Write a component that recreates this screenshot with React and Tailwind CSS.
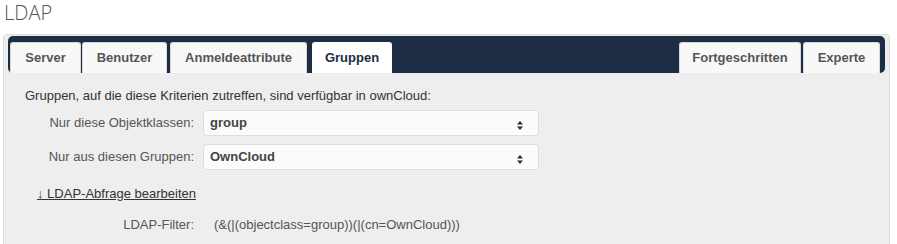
import React from "react";

const ArrowIcon = () => (
	<svg width="6" height="9" viewBox="0 0 6 9" className="mt-[10px]">
		<path d="M3 0 L6 3.5 H0 Z" fill="#1d2d44" />
		<path d="M0 5.5 H6 L3 9 Z" fill="#1d2d44" />
	</svg>
);

const Select = ({ value }) => (
	<div className="w-[336px] h-[26px] bg-[#fbfbfb] border border-[#dedede] rounded-[3px] flex items-start justify-between pl-[6px] pr-[15px]">
		<span className="font-bold text-[#444] text-[13px] leading-[24px]">{value}</span>
		<ArrowIcon />
	</div>
);

const App = () => {
	// Tabs with their measured widths and left margins
	const leftTabs = [
		{ label: "Server", w: "w-[71px]", ml: "ml-[2px]" },
		{ label: "Benutzer", w: "w-[85px]", ml: "ml-[1px]" },
		{ label: "Anmeldeattribute", w: "w-[137px]", ml: "ml-[3px]" },
	];

	return (
		<div className="w-[897px] h-[244px] bg-white overflow-hidden font-['Liberation_Sans',Arial,sans-serif] text-[13px]">
			<h2 className="pl-[4px] pt-[1px] h-[34px] text-[20px] leading-[24px] text-[#555] font-light font-['Open_Sans',sans-serif]">
				LDAP
			</h2>
			<div className="ml-[3px] w-[887px] h-[220px] border border-[#dcdcdc] rounded-[4px] bg-[#eeeeee] px-[4px] pt-[1px]">
				{/* Tab bar */}
				<div className="h-[37px] bg-[#1d2d44] rounded-[5px] flex items-end pr-[5px]">
					{leftTabs.map((t) => (
						<div
							key={t.label}
							className={`${t.w} ${t.ml} h-[31px] bg-[#f8f8f8] border border-[#d8d8d8] border-b-0 rounded-t-[3px] flex items-center justify-center font-bold text-[#555]`}
						>
							{t.label}
						</div>
					))}
					<div className="w-[80px] ml-[5px] h-[31px] bg-white rounded-t-[3px] flex items-center justify-center font-bold text-[#1d2d44]">
						Gruppen
					</div>
					<div className="flex-1" />
					<div className="w-[122px] h-[31px] bg-[#f8f8f8] border border-[#d8d8d8] border-b-0 rounded-t-[3px] flex items-center justify-center font-bold text-[#555]">
						Fortgeschritten
					</div>
					<div className="w-[77px] ml-[2px] h-[31px] bg-[#f8f8f8] border border-[#d8d8d8] border-b-0 rounded-t-[3px] flex items-center justify-center font-bold text-[#555]">
						Experte
					</div>
				</div>

				{/* Content */}
				<div className="pl-[17px] pt-[15px] text-[#333]">
					<p className="leading-[16px]">Gruppen, auf die diese Kriterien zutreffen, sind verfügbar in ownCloud:</p>
					<div className="mt-[6px] flex flex-col gap-[8px] ml-[-21px]">
						<div className="flex items-center">
							<span className="w-[190px] text-right text-[#555]">Nur diese Objektklassen:</span>
							<div className="ml-[9px]">
								<Select value="group" />
							</div>
						</div>
						<div className="flex items-center">
							<span className="w-[190px] text-right text-[#555]">Nur aus diesen Gruppen:</span>
							<div className="ml-[9px]">
								<Select value="OwnCloud" />
							</div>
						</div>
					</div>
					<div className="mt-[16px] ml-[12px] leading-[16px]">
						<a href="#" className="underline text-[#333]">↓ LDAP-Abfrage bearbeiten</a>
					</div>
					<div className="mt-[15px] ml-[-21px] flex leading-[16px]">
						<span className="w-[190px] text-right text-[#555]">LDAP-Filter:</span>
						<span className="ml-[20px] text-[#555]">(&amp;(|(objectclass=group))(|(cn=OwnCloud)))</span>
					</div>
				</div>
			</div>
		</div>
	);
};

export default App;
